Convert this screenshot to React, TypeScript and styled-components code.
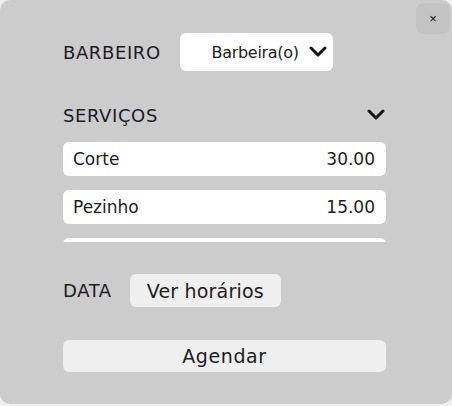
import React from 'react';
import styled, { createGlobalStyle } from 'styled-components';

const Global = createGlobalStyle`
    body {
        margin: 0;
        background: #f0f0f0;
        font-family: "DejaVu Sans", sans-serif;
    }
`;

const Modal = styled.div`
    position: relative;
    width: 452px;
    height: 404px;
    box-sizing: border-box;
    background: #cccccc;
    border-radius: 10px;
    padding: 33px 66px 0 63px;
    display: flex;
    flex-direction: column;
`;

const Close = styled.button`
    position: absolute;
    top: 3px;
    right: 2px;
    width: 34px;
    height: 31px;
    border: none;
    border-radius: 8px;
    background: #c3c3c3;
    font-size: 13px;
    color: #111;
    padding: 0;
`;

const FieldRow = styled.div`
    display: flex;
    align-items: center;
    gap: 19px;
`;

const Label = styled.span`
    font-size: 18px;
    color: #1b1b24;
    letter-spacing: 0.6px;
`;

const Select = styled.div`
    width: 153px;
    height: 38px;
    box-sizing: border-box;
    background: #fff;
    border-radius: 6px;
    display: flex;
    align-items: center;
    justify-content: flex-end;
    gap: 10px;
    padding-right: 6px;
    font-size: 16px;
    letter-spacing: -0.3px;
    color: #222;
`;

const SectionHead = styled.div`
    margin-top: 32px;
    height: 24px;
    display: flex;
    align-items: center;
    justify-content: space-between;
    padding-right: 1px;
`;

const List = styled.div`
    margin-top: 15px;
    height: 100px;
    overflow: hidden;
    display: flex;
    flex-direction: column;
    gap: 14px;
`;

const Item = styled.div`
    flex: none;
    height: 34px;
    background: #fff;
    border-radius: 6px;
    display: flex;
    align-items: center;
    justify-content: space-between;
    padding: 0 11px 0 10px;
    font-size: 17px;
    color: #1c1c1c;
`;

const DateRow = styled(FieldRow)`
    margin-top: 32px;
    gap: 18px;
`;

const Button = styled.button<{ $wide?: boolean }>`
    height: ${p => (p.$wide ? '32px' : '33px')};
    width: ${p => (p.$wide ? '100%' : '151px')};
    border: none;
    border-radius: 6px;
    background: #efefef;
    font-family: inherit;
    font-size: 19px;
    letter-spacing: ${p => (p.$wide ? '0.6px' : '0.2px')};
    color: #1c1c1c;
    padding: 0;
`;

const Bottom = styled.div`
    margin-top: 33px;
`;

const Chevron = () => (
    <svg width="18" height="12" viewBox="0 0 18 12">
        <path d="M2 2 L9 9 L16 2" fill="none" stroke="#111" strokeWidth="3" strokeLinecap="round" strokeLinejoin="round" />
    </svg>
);

const services = [
    { name: 'Corte', price: 30 },
    { name: 'Pezinho', price: 15 },
    { name: 'Barba', price: 20 },
];

const App = () => {
    return (
        <>
            <Global />
            <Modal>
                <Close>×</Close>
                <FieldRow>
                    <Label>BARBEIRO</Label>
                    <Select>
                        Barbeira(o)
                        <Chevron />
                    </Select>
                </FieldRow>
                <SectionHead>
                    <Label>SERVIÇOS</Label>
                    <Chevron />
                </SectionHead>
                <List>
                    {services.map(s => (
                        <Item key={s.name}>
                            <span>{s.name}</span>
                            <span>{s.price.toFixed(2)}</span>
                        </Item>
                    ))}
                </List>
                <DateRow>
                    <Label>DATA</Label>
                    <Button>Ver horários</Button>
                </DateRow>
                <Bottom>
                    <Button $wide>Agendar</Button>
                </Bottom>
            </Modal>
        </>
    );
};

export default App;
